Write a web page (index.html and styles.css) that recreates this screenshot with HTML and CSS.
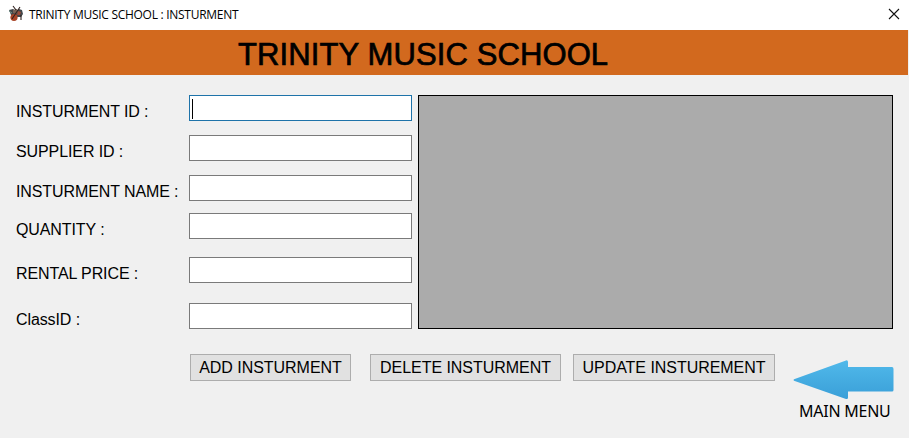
FILE: index.html
```
<!DOCTYPE html>
<html lang="en">
<head>
<meta charset="utf-8">
<title>TRINITY MUSIC SCHOOL : INSTURMENT</title>
<link rel="stylesheet" href="styles.css">
</head>
<body>
<header class="titlebar">
  <svg class="app-icon" width="16" height="18" viewBox="0 0 16 18">
    <path d="M1 5L5 4 8 6 11 4 14 5 15 9 13 12 8 12 3 10z" fill="#42474a"/>
    <path d="M5 5L9 4 10 7 8 9 5 8z" fill="#786255"/>
    <path d="M10 6L13 7 12 10 9 10z" fill="#9c4c3a"/>
    <ellipse cx="6" cy="12.5" rx="3.6" ry="3.4" fill="#a94427"/>
    <path d="M4 14L12 2M5 1l3 4M13 10v5" stroke="#30211e" stroke-width="1.1"/>
    <path d="M1 6l3 2" stroke="#6c9289"/>
  </svg>
  <span class="caption">TRINITY MUSIC SCHOOL : INSTURMENT</span>
  <svg class="close" width="12" height="12" viewBox="0 0 12 12"><path d="M1 1L11 11M11 1L1 11" stroke="#111" stroke-width="1.1"/></svg>
</header>
<div class="banner"><h1>TRINITY MUSIC SCHOOL</h1></div>
<main>
  <section class="content">
    <form class="fields">
      <label>INSTURMENT ID :</label><div class="box focused"><i class="caret"></i></div>
      <label>SUPPLIER ID :</label><div class="box"></div>
      <label>INSTURMENT NAME :</label><div class="box"></div>
      <label>QUANTITY :</label><div class="box"></div>
      <label>RENTAL PRICE :</label><div class="box"></div>
      <label>ClassID :</label><div class="box"></div>
    </form>
    <div class="data-grid"></div>
  </section>
  <footer class="actions">
    <button class="add">ADD INSTURMENT</button>
    <button class="delete">DELETE INSTURMENT</button>
    <button class="update">UPDATE INSTUREMENT</button>
    <div class="menu">
      <svg width="101" height="40" viewBox="0 0 101 40">
        <defs><linearGradient id="blue" x2="0" y2="1"><stop stop-color="#50b9ea"/><stop offset="1" stop-color="#3a9fd8"/></linearGradient></defs>
        <path d="M1 19.2L53 .4Q55 0 55 2V7H99Q100.500 7 100.500 9V30Q100.500 31.500 99 31.500H55V37.500Q55 39.500 53 39L1 20.800Q0 20 1 19.200z" fill="url(#blue)"/>
      </svg>
      <span>MAIN MENU</span>
    </div>
  </footer>
</main>
</body>
</html>
```
FILE: styles.css
```
* { box-sizing: border-box; }
body {
  margin: 0;
  width: 909px;
  height: 438px;
  overflow: hidden;
  background: #f0f0f0;
  color: #000;
  font: 16px/20px "Liberation Sans", sans-serif;
}
.titlebar {
  display: flex;
  align-items: center;
  height: 30px;
  padding: 0 9px 2px 8px;
  background: #fff;
}
.caption {
  margin: 2px 0 0 5px;
  font: 12px/16px "Open Sans", sans-serif;
  letter-spacing: -.28px;
  white-space: nowrap;
}
.close { margin-left: auto; }
.banner {
  width: 908px;
  height: 45px;
  padding-left: 238px;
  background: #d2691e;
}
h1 {
  margin: 0;
  font-size: 31px;
  line-height: 49px;
  font-weight: 400;
  letter-spacing: .11px;
  -webkit-text-stroke: .7px #000;
  white-space: nowrap;
}
main { padding: 20px 15px 0 16px; }
.content { display: flex; gap: 6px; }
.fields {
  display: grid;
  grid-template-columns: 173px 223px;
  grid-template-rows: 40px 40px 38px 44px 46px 26px;
}
label {
  padding-top: 7px;
  letter-spacing: -.1px;
  white-space: nowrap;
}
.box {
  height: 26px;
  padding: 3px 2px;
  border: 1px solid #7a7a7a;
  background: #fff;
}
.focused { border-color: #1e73a9; }
.caret { display: block; width: 1px; height: 20px; background: #000; }
.data-grid {
  width: 475px;
  height: 234px;
  border: 1px solid #000;
  background: #ababab;
}
.actions {
  display: flex;
  align-items: flex-start;
  margin: 25px 0 0 174px;
}
.actions > * { flex-shrink: 0; }
button {
  height: 27px;
  padding: 0;
  border: 1px solid #adadad;
  background: #e1e1e1;
  color: #000;
  font: 16px/25px "Liberation Sans", sans-serif;
  letter-spacing: -.04px;
  white-space: nowrap;
}
.add { width: 161px; margin-right: 19px; }
.delete { width: 191px; margin-right: 12px; }
.update { width: 202px; }
.menu {
  display: flex;
  flex-direction: column;
  width: 101px;
  margin: 6px 0 0 18px;
}
.menu span {
  margin: 1px 0 0 6px;
  font: 16px/20px "Noto Sans", sans-serif;
  letter-spacing: -.25px;
  white-space: nowrap;
}
```
